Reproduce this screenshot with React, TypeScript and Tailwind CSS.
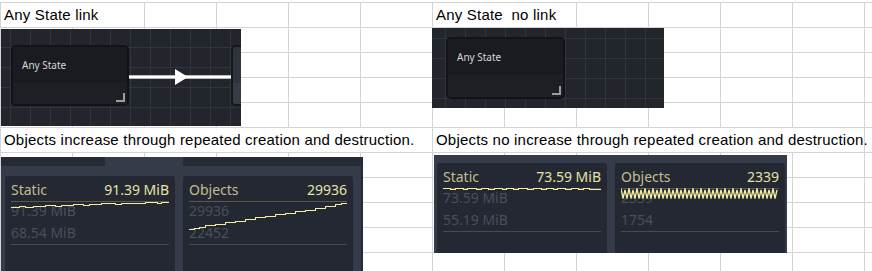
import React from 'react';

type Cell = { span?: 2 | 6; text?: string };

const spanClass = { 2: 'col-span-2', 6: 'col-span-6' } as const;

const blankRow: Cell[] = Array.from({ length: 13 }, () => ({}));

const rows: Cell[][] = [
  [{ span: 2, text: 'Any State link' }, {}, {}, {}, {}, { span: 2, text: 'Any State  no link' }, {}, {}, {}, {}, {}],
  blankRow,
  blankRow,
  blankRow,
  blankRow,
  [
    { span: 6, text: 'Objects increase through repeated creation and destruction.' },
    { span: 6, text: 'Objects no increase through repeated creation and destruction.' },
    {},
  ],
  blankRow,
  blankRow,
  blankRow,
  blankRow,
  blankRow,
];

// horizontal-then-vertical steps, like the monitor graphs draw
const stairs = (pts: [number, number][]) => {
  const out: string[] = [];
  pts.forEach(([x, y], i) => {
    if (i > 0) out.push(`${x},${pts[i - 1][1] + 0.5}`);
    out.push(`${x},${y + 0.5}`);
  });
  return out.join(' ');
};

const zigzag = () => {
  const levels = [1.5, 11.5, 3, 11.5];
  const out: string[] = [];
  for (let i = 0; i <= 78; i++) out.push(`${i * 2},${levels[i % 4]}`);
  return out.join(' ');
};

const flatDashes = () => {
  const lens = [7, 5, 8, 4, 9, 5, 7, 6, 8, 4, 7, 5, 9, 6, 8, 5, 7, 4, 8, 6, 7, 5, 6, 8];
  const pts: [number, number][] = [];
  let x = 0;
  lens.forEach((l, i) => {
    pts.push([x, i % 2 === 0 ? 1 : 2]);
    x = Math.min(158, x + l);
  });
  pts.push([158, 1]);
  return stairs(pts);
};

const canvasBg =
  'bg-[#22252c] bg-[linear-gradient(to_right,#30343c_1px,transparent_1px),linear-gradient(to_bottom,#30343c_1px,transparent_1px)] bg-[size:20px_20px]';

const StateNode = ({ className = '' }: { className?: string }) => (
  <div className={`absolute flex flex-col overflow-hidden rounded-[5px] border-2 border-[#111318] ${className}`}>
    <div className="h-[36px] shrink-0 bg-[#191b21] pl-[9px] pt-[12px] font-['Noto_Sans',sans-serif] text-[10px] leading-[12px] text-[#d6d6d6]">
      Any State
    </div>
    <div className="relative flex-1 bg-[#1d1f25]">
      <svg className="absolute bottom-[2px] right-[2px]" width="9" height="9" viewBox="0 0 9 9">
        <path d="M7 0h2v9H0V7h7z" fill="#9c9c9c" />
      </svg>
    </div>
  </div>
);

const MemoryCard = ({
  label,
  value,
  hi,
  lo,
  children,
}: {
  label: string;
  value: string;
  hi: string;
  lo: string;
  children: React.ReactNode;
}) => (
  <div className="relative h-[120px] w-[170px] shrink-0 rounded-[3px] bg-[#232833] px-[6px] font-['Noto_Sans',sans-serif] text-[14px]">
    <div className="flex h-[26px] justify-between border-b border-[#58584b] pt-[4px] leading-[20px]">
      <span className="text-[#c2be91]">{label}</span>
      <span className="text-[#e6e2a6]">{value}</span>
    </div>
    <div className="border-b border-[#464a51] leading-[22px] text-[#4a4f58]">
      <div className="-mt-[2px]">{hi}</div>
      <div>{lo}</div>
    </div>
    <svg className="absolute left-[6px] top-[24px]" width="158" height="40" viewBox="0 0 158 40">
      {children}
    </svg>
  </div>
);

const line = (points: string, crisp = true) => (
  <polyline
    points={points}
    fill="none"
    stroke="#f3eea2"
    strokeWidth={crisp ? 1 : 1.3}
    shapeRendering={crisp ? 'crispEdges' : 'auto'}
  />
);

export default function App() {
  return (
    <div className="relative h-[271px] w-[872px] overflow-hidden bg-white">
      {/* sheet cells */}
      <div className="pt-[2px]">
        <div className="grid w-max grid-cols-[repeat(13,72px)] border-l border-t border-[#d4d4d4]">
          {rows.map((row, r) =>
            row.map((cell, c) => (
              <div
                key={`${r}-${c}`}
                className={`h-[25px] whitespace-pre border-b border-r border-[#d4d4d4] pl-[3px] font-['Liberation_Sans',Arial,sans-serif] text-[15px] leading-[24px] tracking-[0.2px] text-black ${
                  cell.span ? spanClass[cell.span] : ''
                }`}
              >
                {cell.text}
              </div>
            ))
          )}
        </div>
      </div>

      {/* picture: any state with link */}
      <div className={`absolute left-[1px] top-[29px] h-[97px] w-[240px] overflow-hidden ${canvasBg} bg-[position:9px_18px]`}>
        <svg className="absolute inset-0" width="240" height="97" viewBox="0 0 240 97">
          <rect x="128" y="46" width="104" height="4" fill="#b9b9b9" />
          <rect x="128" y="47" width="104" height="2" fill="#ffffff" />
          <polygon points="174,40 187,48 174,56" fill="#ffffff" />
        </svg>
        <StateNode className="left-[10px] top-[16px] h-[61px] w-[118px]" />
        <div className="absolute left-[230px] top-[16px] flex h-[61px] w-[24px] flex-col overflow-hidden rounded-[5px] border-2 border-[#15171b]">
          <div className="h-[36px] shrink-0 bg-[#2f333c]" />
          <div className="flex-1 bg-[#373b45]" />
        </div>
      </div>

      {/* picture: any state without link */}
      <div className={`absolute left-[432px] top-[28px] h-[80px] w-[232px] overflow-hidden ${canvasBg} bg-[position:13px_10px]`}>
        <StateNode className="left-[14px] top-[9px] h-[62px] w-[119px]" />
      </div>

      {/* picture: monitors, objects growing */}
      <div className="absolute left-[1px] top-[157px] flex h-[130px] w-[362px] flex-col overflow-hidden">
        <div className="flex h-[9px] shrink-0">
          <div className="w-[104px] bg-[#262a33]" />
          <div className="w-[78px] bg-[#353b48]" />
          <div className="flex-1 bg-[#262a33]" />
        </div>
        <div className="flex flex-1 gap-[8px] border-r-2 border-[#262a33] bg-[#353b48] pl-[4px] pt-[10px]">
          <MemoryCard label="Static" value="91.39 MiB" hi="91.39 MiB" lo="68.54 MiB">
            {line(
              stairs([
                [0, 7], [8, 6], [14, 7], [22, 6], [34, 5], [44, 6], [50, 5], [62, 4], [72, 5],
                [78, 4], [90, 3], [104, 4], [110, 3], [124, 3], [134, 2], [146, 3], [150, 2], [158, 2],
              ])
            )}
          </MemoryCard>
          <MemoryCard label="Objects" value="29936" hi="29936" lo="22452">
            {line(
              stairs([
                [0, 29], [5, 28], [10, 27], [16, 25], [26, 24], [36, 22], [46, 21], [56, 19], [66, 17],
                [76, 16], [86, 14], [96, 13], [106, 11], [116, 10], [126, 8], [136, 6], [146, 4], [152, 3], [158, 2],
              ])
            )}
          </MemoryCard>
        </div>
      </div>

      {/* picture: monitors, objects steady */}
      <div className="absolute left-[434px] top-[155px] flex h-[98px] w-[353px] gap-[8px] overflow-hidden bg-[#353b48] pl-[3px] pt-[8px]">
        <MemoryCard label="Static" value="73.59 MiB" hi="73.59 MiB" lo="55.19 MiB">
          {line(flatDashes())}
        </MemoryCard>
        <MemoryCard label="Objects" value="2339" hi="2339" lo="1754">
          {line(zigzag(), false)}
        </MemoryCard>
      </div>
    </div>
  );
}
